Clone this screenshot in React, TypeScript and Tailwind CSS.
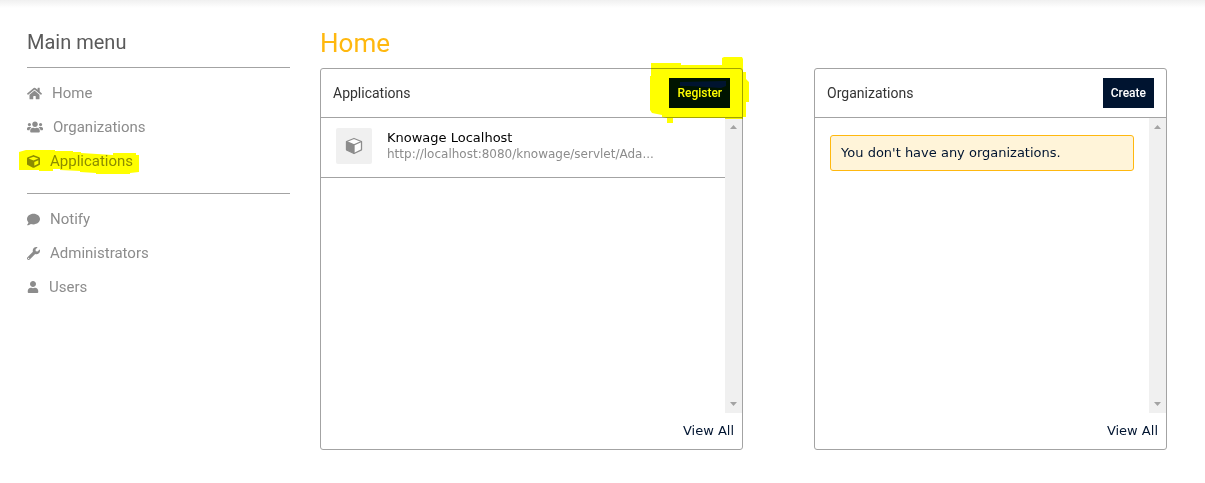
import React from "react";
import type { ReactNode } from "react";
import { FaHome, FaUsers, FaCube, FaComment, FaWrench, FaUser } from "react-icons/fa";

type MenuItemProps = { icon: ReactNode; label: string; marker?: ReactNode };

function MenuItem({ icon, label, marker }: MenuItemProps) {
  return (
    <li className="relative">
      <a href="#" className="flex h-[34px] items-center gap-[10px] text-[15px] text-[#8c8c8c]">
        <span className="text-[13px]">{icon}</span>
        {label}
      </a>
      {marker}
    </li>
  );
}

function MenuMarker() {
  return (
    <svg
      className="pointer-events-none absolute -left-2 top-[5px] mix-blend-multiply"
      width="121"
      height="26"
      viewBox="19 149 121 26"
      aria-hidden="true"
    >
      <path
        fill="#ffff00"
        d="M19 152L26 150H55V151H73V152H81V153L113 155V153H136V155H139V172L130 173V174H96V173L80 172V171L60 170V169H53V171H39V170H19Z"
      />
    </svg>
  );
}

function ButtonMarker() {
  return (
    <svg
      className="pointer-events-none absolute -right-[7px] -top-3 z-10 mix-blend-multiply"
      width="99"
      height="67"
      viewBox="650 57 99 67"
      aria-hidden="true"
    >
      <path
        fill="#ffff00"
        fillRule="evenodd"
        d="M651 63H681V65H722V58L724 57H742L743 59V72H746V79L749 82V102H746V117H743V119H725V118H673V123H667V118L662 117V115L652 113L650 110V76H651ZM680 82L726 81V86L721 88L690 86H680Z"
      />
    </svg>
  );
}

function ScrollTrack() {
  return (
    <div className="flex w-[17px] shrink-0 flex-col items-center justify-between bg-[#f0f0f0] py-[7px]" aria-hidden="true">
      <svg width="7" height="4" viewBox="0 0 7 4"><path fill="#a3a3a3" d="M0 4L3.5 0L7 4Z" /></svg>
      <svg width="7" height="4" viewBox="0 0 7 4"><path fill="#a3a3a3" d="M0 0L3.5 4L7 0Z" /></svg>
    </div>
  );
}

type CardProps = { title: string; action: string; className: string; marker?: ReactNode; children: ReactNode };

function Card({ title, action, className, marker, children }: CardProps) {
  return (
    <section className={"relative min-w-0 rounded-[3px] border border-[#a3a3a3] " + className}>
      <header className="flex h-[49px] items-center justify-between border-b border-[#a3a3a3] px-3">
        <h2 className="text-[14px] text-[#333333]">{title}</h2>
        <button type="button" className="h-[30px] bg-[#001430] px-2 text-[12px] font-medium text-white">
          {action}
        </button>
      </header>
      <div className="flex h-[295px] font-['DejaVu_Sans',sans-serif]">
        <div className="min-w-0 flex-1">{children}</div>
        <ScrollTrack />
      </div>
      <footer className="flex h-9 items-center justify-end px-2 font-['DejaVu_Sans',sans-serif]">
        <a href="#" className="text-[13px] text-[#001430]">View All</a>
      </footer>
      {marker}
    </section>
  );
}

function BoxIcon() {
  return (
    <svg width="18" height="18" viewBox="0 0 18 18" aria-hidden="true">
      <path fill="#ffffff" stroke="#8c8c8c" strokeWidth="1.3" strokeLinejoin="round" d="M9 1.5L16.5 4.5V12.8L9 16.5L1.5 12.8V4.5Z" />
      <path fill="#8c8c8c" d="M1.5 4.5L9 7.8V16.5L1.5 12.8Z" />
      <path fill="none" stroke="#8c8c8c" strokeWidth="1.3" d="M1.5 4.5L9 7.8L16.5 4.5M9 7.8V16.5" />
    </svg>
  );
}

export default function App() {
  return (
    <div className="isolate min-h-screen bg-white font-[Roboto,sans-serif]">
      <div className="h-2 bg-linear-to-b from-[#f0f0f0] to-white" />
      <div className="flex pl-[27px] pr-[38px]">
        <nav className="w-[263px] shrink-0" aria-label="Main menu">
          <h2 className="flex h-[60px] items-center border-b border-[#a3a3a3] pt-2 text-[20px] text-[#5a5a5a]">Main menu</h2>
          <ul className="border-b border-[#a3a3a3] pb-[15px] pt-2">
            <MenuItem icon={<FaHome size={15} />} label="Home" />
            <MenuItem icon={<FaUsers size={16} />} label="Organizations" />
            <MenuItem icon={<FaCube />} label="Applications" marker={<MenuMarker />} />
          </ul>
          <ul className="pt-2">
            <MenuItem icon={<FaComment />} label="Notify" />
            <MenuItem icon={<FaWrench />} label="Administrators" />
            <MenuItem icon={<FaUser size={12} />} label="Users" />
          </ul>
        </nav>
        <main className="ml-[30px] min-w-0 flex-1">
          <h1 className="flex h-[60px] items-center pt-[10px] text-[26px] text-[#ffb80f]">Home</h1>
          <div className="flex gap-[71px]">
            <Card title="Applications" action="Register" className="flex-[6_1_0%]" marker={<ButtonMarker />}>
              <a href="#" className="flex h-[60px] items-center gap-[15px] border-b border-[#a3a3a3] pb-1 pl-[15px]">
                <span className="flex size-9 shrink-0 items-center justify-center rounded-[2px] bg-[#f0f0f0]">
                  <BoxIcon />
                </span>
                <span className="min-w-0">
                  <span className="block text-[13px] leading-[17px] text-black">Knowage Localhost</span>
                  <span className="block text-[12px] leading-[17px] text-[#8c8c8c]">http://localhost:8080/knowage/servlet/Ada...</span>
                </span>
              </a>
            </Card>
            <Card title="Organizations" action="Create" className="flex-[5_1_0%]">
              <p className="mx-[15px] mt-[17px] flex h-9 items-center rounded-[3px] border border-[#ffb80f] bg-[#fff4d9] px-[10px] text-[13px] text-[#001430]">
                You don't have any organizations.
              </p>
            </Card>
          </div>
        </main>
      </div>
    </div>
  );
}
